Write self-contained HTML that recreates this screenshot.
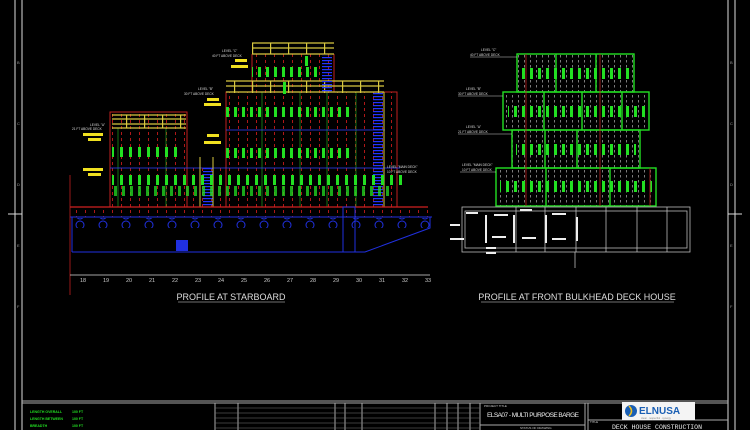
<!DOCTYPE html>
<html><head><meta charset="utf-8"><style>
html,body{margin:0;padding:0;background:#000;}
svg{display:block;font-family:"Liberation Sans",sans-serif;}
</style></head><body>
<svg width="750" height="430" viewBox="0 0 750 430" xmlns="http://www.w3.org/2000/svg">
<defs>
<pattern id="gb" width="8" height="10" patternUnits="userSpaceOnUse"><rect x="2" y="0" width="3" height="10" fill="#22e022"/></pattern>
<pattern id="gb2" width="9" height="10" patternUnits="userSpaceOnUse"><rect x="3" y="0" width="3" height="10" fill="#22e022"/></pattern>
<pattern id="rd" width="9" height="6" patternUnits="userSpaceOnUse"><rect x="4" y="0" width="1" height="3" fill="#b01818"/></pattern>
<pattern id="wd" width="6" height="5" patternUnits="userSpaceOnUse"><rect x="2" y="0" width="0.8" height="2.5" fill="#999"/></pattern>
<pattern id="rail" width="18" height="14" patternUnits="userSpaceOnUse"><rect x="0" y="0" width="1.2" height="14" fill="#d8c840"/></pattern>
<pattern id="st" width="10" height="3" patternUnits="userSpaceOnUse"><rect x="0" y="0" width="10" height="1.2" fill="#2233ff"/></pattern>
<pattern id="bolt" width="23" height="10" patternUnits="userSpaceOnUse"><circle cx="11" cy="5" r="4" fill="none" stroke="#2030e0" stroke-width="1"/></pattern>
</defs>
<rect width="750" height="430" fill="#000"/>
<g stroke="#ddd" stroke-width="1" fill="none">
<line x1="15" y1="0" x2="15" y2="430"/><line x1="22" y1="0" x2="22" y2="430"/>
<line x1="728" y1="0" x2="728" y2="430"/><line x1="735" y1="0" x2="735" y2="430"/>
<line x1="8" y1="214" x2="22" y2="214"/><line x1="728" y1="214" x2="742" y2="214"/>
</g>
<g fill="#999" font-size="4"><text x="17" y="64">B</text><text x="17" y="125">C</text><text x="17" y="186">D</text><text x="17" y="247">E</text><text x="17" y="308">F</text>
<text x="730" y="64">B</text><text x="730" y="125">C</text><text x="730" y="186">D</text><text x="730" y="247">E</text><text x="730" y="308">F</text></g>

<rect x="110" y="112" width="77" height="95" fill="url(#rd)"/>
<rect x="226" y="92" width="171" height="115" fill="url(#rd)"/>
<rect x="252" y="54" width="82" height="38" fill="url(#rd)"/>
<rect x="187" y="168" width="39" height="39" fill="url(#rd)"/>
<g fill="none" stroke="#c02020" stroke-width="1">
<rect x="110" y="112" width="77" height="95"/>
<rect x="226" y="92" width="171" height="115"/>
<line x1="252" y1="54" x2="252" y2="92"/><line x1="334" y1="54" x2="334" y2="92"/>
</g>
<g stroke="#22c022" stroke-width="0.6"><line x1="118" y1="128" x2="118" y2="207"/><line x1="166" y1="128" x2="166" y2="207"/><line x1="262" y1="92" x2="262" y2="207"/><line x1="300" y1="92" x2="300" y2="207"/><line x1="327" y1="92" x2="327" y2="207"/><line x1="356" y1="92" x2="356" y2="207"/></g>
<line x1="110" y1="168" x2="400" y2="168" stroke="#3040ff" stroke-width="0.8"/>
<line x1="226" y1="130" x2="385" y2="130" stroke="#3040ff" stroke-width="0.8"/>
<rect x="112" y="115" width="74" height="13" fill="url(#rail)"/>
<g stroke="#d8c840" stroke-width="1.2"><line x1="112" y1="115" x2="186" y2="115"/><line x1="112" y1="119" x2="186" y2="119"/><line x1="112" y1="124" x2="186" y2="124"/><line x1="112" y1="128" x2="186" y2="128"/></g>
<rect x="226" y="81" width="158" height="12" fill="url(#rail)"/>
<g stroke="#d8c840" stroke-width="1.2"><line x1="226" y1="81" x2="384" y2="81"/><line x1="226" y1="86" x2="384" y2="86"/><line x1="226" y1="92" x2="384" y2="92"/></g>
<rect x="252" y="43" width="82" height="11" fill="url(#rail)"/>
<g stroke="#d8c840" stroke-width="1.2"><line x1="252" y1="43" x2="334" y2="43"/><line x1="252" y1="48" x2="334" y2="48"/><line x1="252" y1="54" x2="334" y2="54"/></g>
<rect x="322" y="55" width="10" height="37" fill="url(#st)"/>
<rect x="373" y="92" width="10" height="115" fill="url(#st)"/>
<rect x="203" y="168" width="10" height="39" fill="url(#st)"/>
<line x1="200" y1="157" x2="200" y2="207" stroke="#d8c840"/><line x1="213" y1="157" x2="213" y2="207" stroke="#d8c840"/>
<line x1="384" y1="92" x2="384" y2="207" stroke="#d8c840"/>
<rect x="112" y="147" width="70" height="10" fill="url(#gb2)"/>
<rect x="112" y="175" width="290" height="10" fill="url(#gb2)"/>
<rect x="114" y="186" width="280" height="10" fill="url(#gb)" opacity="0.75"/>
<rect x="226" y="107" width="128" height="10" fill="url(#gb)"/>
<rect x="226" y="148" width="128" height="10" fill="url(#gb)"/>
<rect x="252" y="67" width="70" height="10" fill="url(#gb)"/>
<rect x="283" y="82" width="3" height="12" fill="#22e022"/><rect x="305" y="56" width="3" height="10" fill="#22e022"/>
<g fill="#ddd" font-size="3.2"><text x="90" y="126">LEVEL "A"</text><text x="72" y="130">21 FT ABOVE DECK</text>
<text x="198" y="90">LEVEL "B"</text><text x="184" y="95">30 FT ABOVE DECK</text>
<text x="222" y="52">LEVEL "C"</text><text x="212" y="57">40 FT ABOVE DECK</text>
<text x="387" y="168">LEVEL "MAIN DECK"</text><text x="387" y="173">10 FT ABOVE DECK</text></g>
<g fill="#f0e020"><rect x="83" y="133" width="20" height="3"/><rect x="88" y="138" width="13" height="3"/><rect x="83" y="168" width="20" height="3"/><rect x="88" y="173" width="13" height="3"/>
<rect x="207" y="98" width="12" height="3"/><rect x="204" y="103" width="17" height="3"/><rect x="207" y="134" width="12" height="3"/><rect x="204" y="141" width="17" height="3"/>
<rect x="235" y="59" width="12" height="3"/><rect x="231" y="65" width="17" height="3"/></g>
<line x1="70" y1="207" x2="428" y2="207" stroke="#d02020" stroke-width="1.2"/>
<rect x="72" y="209" width="360" height="8" fill="url(#rd)"/>
<g fill="none" stroke="#2030e0" stroke-width="1">
<line x1="70" y1="217" x2="432" y2="217"/>
<path d="M72 252 L365 252 L430 228 L430 217"/>
<line x1="72" y1="217" x2="72" y2="252"/>
<rect x="343" y="207" width="12" height="45"/>
</g>
<rect x="72" y="218" width="360" height="10" fill="url(#bolt)"/>
<rect x="176" y="240" width="12" height="11" fill="#2030e0"/>
<line x1="70" y1="175" x2="70" y2="295" stroke="#c02020" stroke-width="0.8"/>
<line x1="70" y1="275" x2="430" y2="275" stroke="#ddd" stroke-width="0.8"/>
<g fill="#ccc" font-size="5.5" text-anchor="middle">
<text x="83" y="282">18</text><text x="106" y="282">19</text><text x="129" y="282">20</text><text x="152" y="282">21</text><text x="175" y="282">22</text><text x="198" y="282">23</text><text x="221" y="282">24</text><text x="244" y="282">25</text><text x="267" y="282">26</text><text x="290" y="282">27</text><text x="313" y="282">28</text><text x="336" y="282">29</text><text x="359" y="282">30</text><text x="382" y="282">31</text><text x="405" y="282">32</text><text x="428" y="282">33</text></g>
<text x="231" y="300" fill="#ddd" font-size="9" text-anchor="middle">PROFILE AT STARBOARD</text>
<line x1="178" y1="302" x2="285" y2="302" stroke="#ddd" stroke-width="0.6"/>

<rect x="517" y="54" width="117" height="38" fill="url(#wd)"/>
<rect x="503" y="92" width="146" height="38" fill="url(#wd)"/>
<rect x="512" y="130" width="128" height="38" fill="url(#wd)"/>
<rect x="496" y="168" width="160" height="38" fill="url(#wd)"/>
<rect x="522" y="68" width="108" height="11" fill="url(#gb)"/>
<rect x="508" y="106" width="138" height="11" fill="url(#gb)"/>
<rect x="516" y="144" width="120" height="11" fill="url(#gb)"/>
<rect x="500" y="181" width="152" height="11" fill="url(#gb)"/>
<g fill="none" stroke="#22e022" stroke-width="1.4">
<rect x="517" y="54" width="117" height="38"/><rect x="503" y="92" width="146" height="38"/>
<rect x="512" y="130" width="128" height="38"/><rect x="496" y="168" width="160" height="38"/>
<line x1="556" y1="54" x2="556" y2="92"/><line x1="596" y1="54" x2="596" y2="92"/>
<line x1="544" y1="92" x2="544" y2="130"/><line x1="582" y1="92" x2="582" y2="130"/><line x1="622" y1="92" x2="622" y2="130"/>
<line x1="545" y1="130" x2="545" y2="168"/><line x1="577" y1="130" x2="577" y2="168"/>
<line x1="546" y1="168" x2="546" y2="206"/><line x1="610" y1="168" x2="610" y2="206"/>
</g>
<g stroke="#c02020" stroke-width="0.8"><line x1="526" y1="54" x2="526" y2="206"/><line x1="600" y1="54" x2="600" y2="206"/><line x1="650" y1="168" x2="650" y2="206"/></g>
<g fill="#ddd" font-size="3.2"><text x="481" y="51">LEVEL "C"</text><text x="470" y="56">40 FT ABOVE DECK</text>
<text x="466" y="90">LEVEL "B"</text><text x="458" y="95">30 FT ABOVE DECK</text>
<text x="466" y="128">LEVEL "A"</text><text x="458" y="133">21 FT ABOVE DECK</text>
<text x="462" y="166">LEVEL "MAIN DECK"</text><text x="462" y="171">10 FT ABOVE DECK</text></g>
<g stroke="#ccc" stroke-width="0.6"><line x1="470" y1="57" x2="517" y2="57"/><line x1="458" y1="96" x2="503" y2="96"/><line x1="458" y1="134" x2="512" y2="134"/><line x1="460" y1="172" x2="496" y2="172"/></g>
<g fill="none" stroke="#bbb" stroke-width="0.8">
<rect x="462" y="207" width="228" height="45"/><rect x="465" y="211" width="222" height="37"/>
<line x1="516" y1="207" x2="516" y2="252"/><line x1="545" y1="207" x2="545" y2="252"/><line x1="576" y1="207" x2="576" y2="252"/><line x1="606" y1="207" x2="606" y2="252"/><line x1="637" y1="207" x2="637" y2="252"/><line x1="667" y1="207" x2="667" y2="252"/>
<line x1="575" y1="252" x2="575" y2="268"/>
</g>
<g fill="#eee"><rect x="485" y="215" width="2" height="28"/><rect x="513" y="215" width="2" height="28"/><rect x="545" y="215" width="2" height="28"/><rect x="576" y="217" width="2" height="24"/>
<rect x="450" y="224" width="10" height="2"/><rect x="450" y="238" width="14" height="2"/><rect x="466" y="212" width="12" height="2"/><rect x="494" y="214" width="14" height="2"/><rect x="520" y="209" width="12" height="2"/><rect x="492" y="236" width="14" height="2"/><rect x="522" y="237" width="14" height="2"/><rect x="552" y="213" width="14" height="2"/><rect x="552" y="238" width="14" height="2"/><rect x="486" y="247" width="10" height="2"/><rect x="486" y="252" width="10" height="2"/></g>
<text x="577" y="300" fill="#ddd" font-size="9" text-anchor="middle">PROFILE AT FRONT BULKHEAD DECK HOUSE</text>
<line x1="481" y1="302" x2="674" y2="302" stroke="#ddd" stroke-width="0.6"/>

<g stroke="#aaa" stroke-width="1" fill="none">
<line x1="22" y1="401" x2="728" y2="401"/><line x1="22" y1="403" x2="728" y2="403"/>
<line x1="215" y1="403" x2="215" y2="430"/><line x1="238" y1="403" x2="238" y2="430"/>
<line x1="335" y1="403" x2="335" y2="430"/><line x1="345" y1="403" x2="345" y2="430"/><line x1="362" y1="403" x2="362" y2="430"/>
<line x1="435" y1="403" x2="435" y2="430"/><line x1="447" y1="403" x2="447" y2="430"/><line x1="458" y1="403" x2="458" y2="430"/><line x1="470" y1="403" x2="470" y2="430"/>
<line x1="480" y1="403" x2="480" y2="430"/><line x1="585" y1="403" x2="585" y2="430"/><line x1="588" y1="403" x2="588" y2="430"/>
<line x1="480" y1="425" x2="585" y2="425"/><line x1="588" y1="420" x2="728" y2="420"/>
</g>
<g stroke="#777" stroke-width="0.6"><line x1="215" y1="408" x2="480" y2="408"/><line x1="215" y1="413" x2="480" y2="413"/><line x1="215" y1="418" x2="480" y2="418"/><line x1="215" y1="423" x2="480" y2="423"/><line x1="215" y1="428" x2="480" y2="428"/></g>
<g fill="#22e022" font-size="3.5" font-weight="bold"><text x="30" y="413">LENGTH OVERALL</text><text x="72" y="413">100 FT</text><text x="30" y="420">LENGTH BETWEEN</text><text x="72" y="420">100 FT</text><text x="30" y="427">BREADTH</text><text x="72" y="427">100 FT</text></g>
<text x="484" y="407" fill="#ccc" font-size="3">PROJECT TITLE</text>
<text x="487" y="417" fill="#eee" font-size="6.5" textLength="92">ELSA07 - MULTI PURPOSE BARGE</text>
<text x="520" y="429" fill="#ccc" font-size="3">STATUS OF DRAWING</text>
<text x="590" y="423" fill="#ccc" font-size="3">TITLE</text>
<rect x="622" y="402" width="73" height="18" fill="#f4f4f4"/>
<circle cx="631" cy="411" r="6" fill="#1a5fb4"/><path d="M629 406 Q634 411 629 416" stroke="#f0c020" stroke-width="1.5" fill="none"/>
<text x="639" y="414" fill="#1a5fb4" font-size="10" font-weight="bold">ELNUSA</text>
<text x="641" y="419" fill="#888" font-size="2.5">clean · respectful · synergy</text>
<text x="612" y="429" fill="#eee" font-size="6.5" textLength="90" font-family="Liberation Mono,monospace">DECK HOUSE CONSTRUCTION</text>
</svg>
</body></html>
